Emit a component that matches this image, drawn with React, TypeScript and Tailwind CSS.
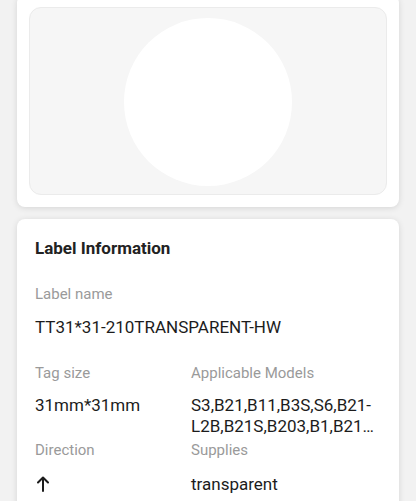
import React from 'react';

const fields = [
  { label: 'Tag size', value: '31mm*31mm' },
  { label: 'Applicable Models', value: 'S3,B21,B11,B3S,S6,B21-L2B,B21S,B203,B1,B21 Pro,D11,D110' },
];

export default function App() {
  return (
    <div className="min-h-[501px] bg-[#f2f2f2] px-[17px] pb-6 font-['Roboto',sans-serif] overflow-hidden">
      {/* preview card */}
      <div className="-mt-[5px] rounded-lg bg-white p-3 shadow-[0_1px_6px_rgba(0,0,0,0.12)]">
        <div className="flex h-[188px] items-start justify-center rounded-xl border border-[#ebebeb] bg-[#f6f6f6] pt-[10px]">
          <div className="h-[168px] w-[168px] rounded-full bg-white" />
        </div>
      </div>

      {/* label information */}
      <div className="mt-3 rounded-lg bg-white px-[18px] pt-[17px] pb-6 shadow-[0_1px_6px_rgba(0,0,0,0.12)]">
        <h2 className="text-[17px] leading-6 font-bold text-[#222]">Label Information</h2>

        <p className="mt-6 text-[15px] leading-5 text-[#9a9a9a]">Label name</p>
        <p className="mt-[11px] text-[17px] leading-6 text-[#1c1c1c]">TT31*31-210TRANSPARENT-HW</p>

        <div className="mt-6 grid grid-cols-[156px_1fr]">
          {fields.map(f => (
            <p key={f.label} className="text-[15px] leading-5 text-[#9a9a9a]">{f.label}</p>
          ))}
          {fields.map(f => (
            <p key={f.value} className="mt-3 h-[42px] overflow-hidden text-[17px] leading-[21px] text-[#1c1c1c] line-clamp-2 break-words">
              {f.value}
            </p>
          ))}
          <p className="mt-[3px] text-[15px] leading-5 text-[#9a9a9a]">Direction</p>
          <p className="mt-[3px] text-[15px] leading-5 text-[#9a9a9a]">Supplies</p>
          <div className="mt-3 flex h-6 items-center pl-[2px]">
            <svg width="12" height="16" viewBox="0 0 12 16" fill="none" stroke="#1c1c1c" strokeWidth="2" strokeLinecap="round" strokeLinejoin="round">
              <path d="M6 15V1.5M1 6.5 6 1.5l5 5" />
            </svg>
          </div>
          <p className="mt-3 text-[17px] leading-6 text-[#1c1c1c]">transparent</p>
        </div>
      </div>
    </div>
  );
}
